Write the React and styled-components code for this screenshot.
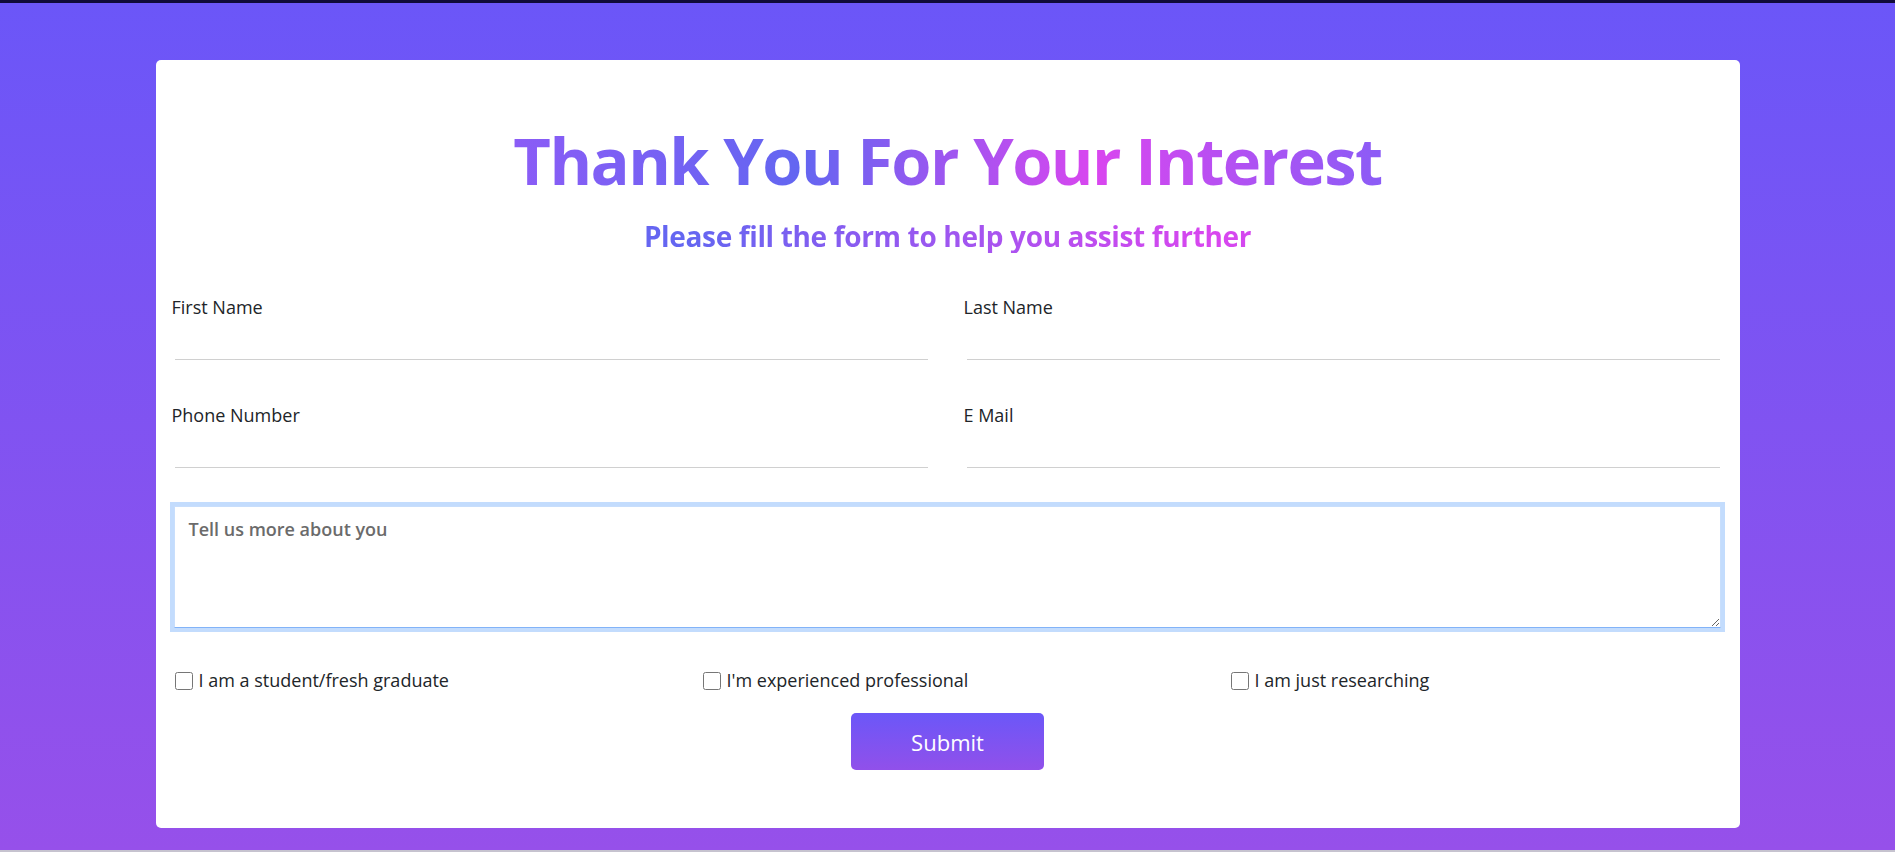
import React from 'react';
import styled, { createGlobalStyle } from 'styled-components';

const GlobalStyle = createGlobalStyle`
    * {
        box-sizing: border-box;
    }

    body {
        margin: 0;
        font-family: "Open Sans", "Noto Sans", sans-serif;
        color: #212529;
    }
`;

const brandGradient = 'linear-gradient(90deg, #8b5cf6 0%, #6366f1 33%, #d946ef 67%, #8b5cf6 100%)';

const Page = styled.div`
    min-height: 852px;
    background: linear-gradient(180deg, #6b56f8 0%, #9650ea 100%);
    border-top: 3px solid #100b3a;
    border-bottom: 2px solid #c6c3cf;
    padding: 57px 0 22px;
`;

const Card = styled.form`
    width: 1584px;
    margin: 0 auto;
    background: #fff;
    border-radius: 5px;
    padding: 61px 14px 58px;
`;

const Heading = styled.div`
    text-align: center;
`;

const Title = styled.h1`
    display: inline-block;
    margin: 0;
    font-size: 65px;
    line-height: 78px;
    font-weight: 700;
    letter-spacing: -1.6px;
    background: ${brandGradient};
    -webkit-background-clip: text;
    background-clip: text;
    color: transparent;
`;

const Subtitle = styled.h2`
    margin: 20px 0 0;
    font-size: 28px;
    line-height: 34px;
    font-weight: 700;
    letter-spacing: -0.35px;
    background: ${brandGradient};
    -webkit-background-clip: text;
    background-clip: text;
    color: transparent;
`;

const FieldGrid = styled.div`
    display: grid;
    grid-template-columns: 760px 760px;
    column-gap: 32px;
    row-gap: 44px;
    margin-top: 43px;
`;

const Field = styled.div`
    display: flex;
    flex-direction: column;
`;

const Label = styled.label`
    padding-left: 2px;
    font-size: 18px;
    line-height: 22px;
    color: #212529;
`;

const Input = styled.input`
    width: 753px;
    height: 42px;
    margin-left: 5px;
    border: none;
    border-bottom: 1px solid #d0d0d0;
    outline: none;
    font: inherit;
    font-size: 18px;
    background: transparent;
`;

const TextArea = styled.textarea`
    display: block;
    width: 1547px;
    height: 122px;
    margin: 38px 0 0 4px;
    padding: 10px 14px;
    border: 1px solid #c8defc;
    border-bottom-color: #82b3f8;
    border-radius: 0;
    box-shadow: 0 0 0 4px #c3dcfd;
    outline: none;
    font-family: "Open Sans", "Noto Sans", sans-serif;
    font-size: 18px;

    &::placeholder {
        color: #6b6b6b;
        font-weight: 600;
    }
`;

const ChoiceRow = styled.div`
    display: grid;
    grid-template-columns: 528px 528px auto;
    margin-top: 41px;
    padding-left: 5px;
`;

const Choice = styled.label`
    display: flex;
    align-items: center;
    gap: 6px;
    font-size: 18px;
    line-height: 23px;
    color: #212529;
`;

const Box = styled.input`
    width: 18px;
    height: 18px;
    margin: 0;
    accent-color: #6b56f8;
`;

const ButtonRow = styled.div`
    display: flex;
    justify-content: center;
    margin-top: 21px;
`;

const SubmitButton = styled.button`
    width: 193px;
    height: 57px;
    border: none;
    border-radius: 5px;
    background: linear-gradient(180deg, #6b57f8 0%, #9150ea 100%);
    color: #fff;
    font-family: "Open Sans", "Noto Sans", sans-serif;
    font-size: 22px;
    cursor: pointer;
`;

const fields = [
    { id: 'firstName', label: 'First Name', type: 'text' },
    { id: 'lastName', label: 'Last Name', type: 'text' },
    { id: 'phone', label: 'Phone Number', type: 'tel' },
    { id: 'email', label: 'E Mail', type: 'email' },
];

const choices = [
    'I am a student/fresh graduate',
    "I'm experienced professional",
    'I am just researching',
];

const App = () => {
    return (
        <>
            <GlobalStyle />
            <Page>
                <Card onSubmit={(e) => e.preventDefault()}>
                    <Heading>
                        <Title>Thank You For Your Interest</Title>
                        <Subtitle>Please fill the form to help you assist further</Subtitle>
                    </Heading>
                    <FieldGrid>
                        {fields.map((f) => (
                            <Field key={f.id}>
                                <Label htmlFor={f.id}>{f.label}</Label>
                                <Input id={f.id} type={f.type} />
                            </Field>
                        ))}
                    </FieldGrid>
                    <TextArea placeholder="Tell us more about you" />
                    <ChoiceRow>
                        {choices.map((c) => (
                            <Choice key={c}>
                                <Box type="checkbox" />
                                {c}
                            </Choice>
                        ))}
                    </ChoiceRow>
                    <ButtonRow>
                        <SubmitButton type="submit">Submit</SubmitButton>
                    </ButtonRow>
                </Card>
            </Page>
        </>
    );
};

export default App;
